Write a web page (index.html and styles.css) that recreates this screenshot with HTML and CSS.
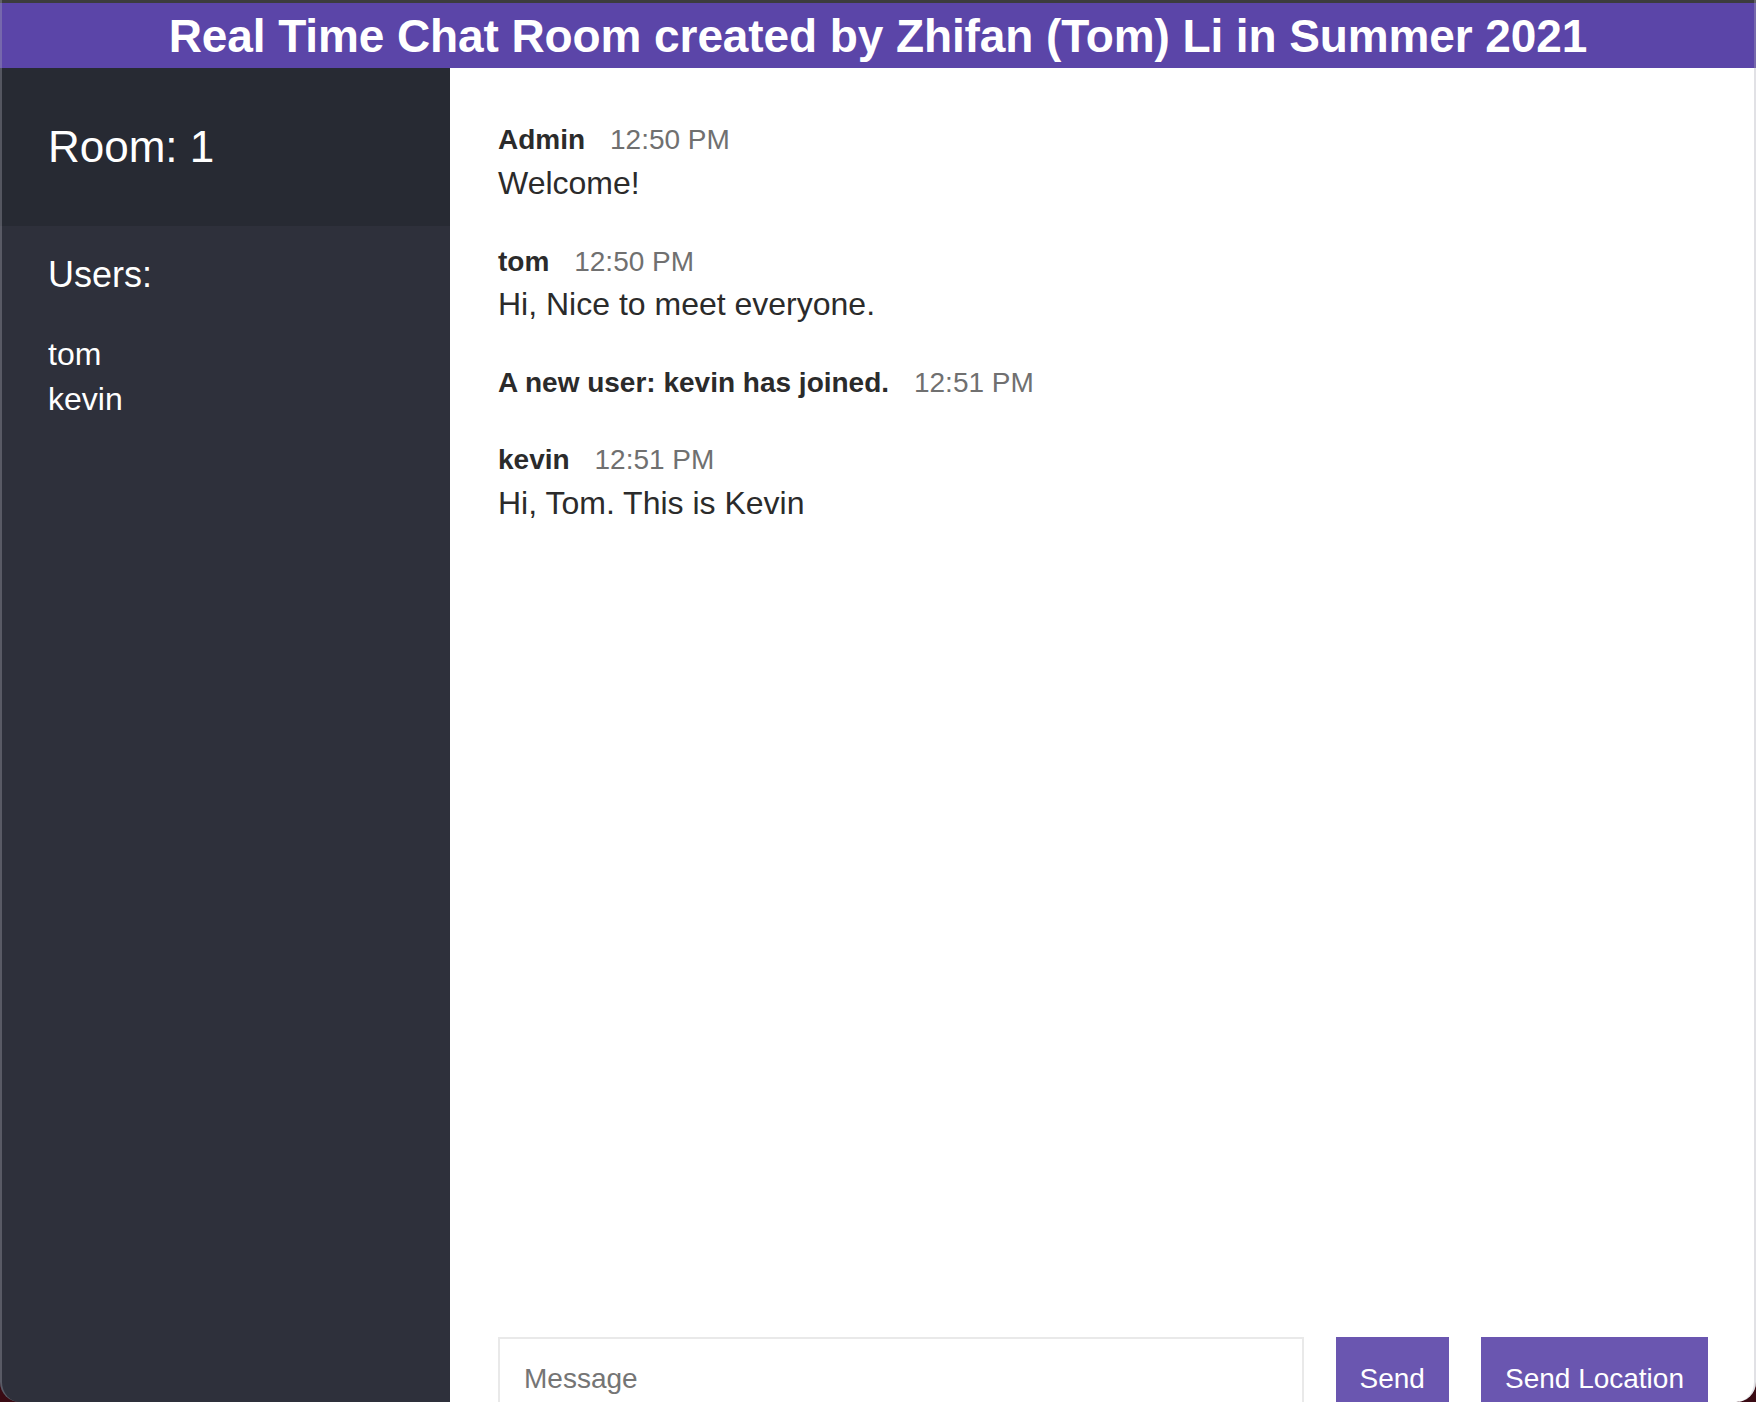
FILE: index.html
```html
<!DOCTYPE html>
<html lang="en">
<head>
<meta charset="utf-8">
<title>Chat App</title>
<link rel="stylesheet" href="styles.css">
</head>
<body>
<div class="topbar"></div>
<header class="header">
  <h1 class="header__title">Real Time Chat Room created by Zhifan (Tom) Li in Summer 2021</h1>
</header>
<div class="chat">
  <aside class="sidebar">
    <h2 class="room-title">Room: 1</h2>
    <h3 class="list-title">Users:</h3>
    <ul class="users">
      <li>tom</li>
      <li>kevin</li>
    </ul>
  </aside>
  <main class="main">
    <div class="messages">
      <div class="message">
        <p><span class="message__name">Admin</span> <span class="message__meta">12:50 PM</span></p>
        <p>Welcome!</p>
      </div>
      <div class="message">
        <p><span class="message__name">tom</span> <span class="message__meta">12:50 PM</span></p>
        <p>Hi, Nice to meet everyone.</p>
      </div>
      <div class="message">
        <p><span class="message__name">A new user: kevin has joined.</span> <span class="message__meta">12:51 PM</span></p>
      </div>
      <div class="message">
        <p><span class="message__name">kevin</span> <span class="message__meta">12:51 PM</span></p>
        <p>Hi, Tom. This is Kevin</p>
      </div>
    </div>
    <div class="compose">
      <form class="compose__form">
        <input class="compose__input" name="message" placeholder="Message" autocomplete="off">
        <button class="btn" type="button">Send</button>
      </form>
      <button class="btn" type="button">Send Location</button>
    </div>
  </main>
</div>
<div class="frame"></div>
</body>
</html>
```

FILE: styles.css
```css
* {
  margin: 0;
  padding: 0;
  box-sizing: border-box;
}

html, body {
  height: 100%;
  overflow: hidden;
}

body {
  font-family: "Liberation Sans", Arial, Helvetica, sans-serif;
  font-size: 32px;
  line-height: 1.4;
  color: #2b2b2b;
  background: #ffffff;
}

.topbar {
  height: 3px;
  background: #3c3c3e;
}

.header {
  height: 65px;
  background: #5b45a8;
  display: flex;
  justify-content: center;
  align-items: flex-start;
}

.header__title {
  color: #ffffff;
  font-size: 46px;
  font-weight: 700;
  line-height: 1;
  padding-top: 10px;
  letter-spacing: -0.1px;
  white-space: nowrap;
}

.chat {
  display: flex;
  height: 1401px;
}

.sidebar {
  width: 450px;
  flex-shrink: 0;
  background: #2e303b;
  color: #ffffff;
}

.room-title {
  font-weight: 400;
  font-size: 44px;
  line-height: 1.4;
  background: #272a33;
  padding: 48px;
}

.list-title {
  font-weight: 400;
  font-size: 36px;
  line-height: 1.4;
  padding: 24px 48px 0 48px;
  margin-bottom: 8px;
}

.users {
  list-style-type: none;
  font-weight: 300;
  font-size: 32px;
  padding: 24px 48px 0 48px;
}

.users li {
  line-height: 1.42;
}

.main {
  flex-grow: 1;
  display: flex;
  flex-direction: column;
}

.messages {
  flex-grow: 1;
  padding: 48px 48px 0 48px;
}

.message {
  margin-bottom: 32px;
}

.message__name {
  font-weight: 700;
  font-size: 28px;
  margin-right: 16px;
}

.message__meta {
  color: #707070;
  font-size: 28px;
}

.compose {
  display: flex;
  flex-shrink: 0;
  margin-top: 32px;
  padding: 48px;
}

.compose__form {
  display: flex;
  flex-grow: 1;
  margin-right: 32px;
}

.compose__input {
  border: 2px solid #e9e9e9;
  width: 100%;
  padding: 24px;
  margin-right: 32px;
  flex-grow: 1;
  font-family: "Liberation Sans", Arial, sans-serif;
  font-size: 28px;
  color: #2b2b2b;
  outline: none;
}

.compose__input::placeholder {
  color: #757575;
}

.btn {
  padding: 24px;
  background: #6a56b0;
  border: none;
  color: #ffffff;
  font-family: "Liberation Sans", Arial, sans-serif;
  font-size: 28px;
  line-height: 32px;
  white-space: nowrap;
  cursor: pointer;
}

.frame {
  position: fixed;
  top: -60px;
  left: 0;
  right: 0;
  bottom: 0;
  border-left: 2px solid rgba(170, 170, 180, 0.35);
  border-right: 2px solid rgba(170, 170, 180, 0.35);
  border-bottom-left-radius: 20px;
  border-bottom-right-radius: 20px;
  box-shadow: 0 0 0 40px #3a0b14;
  pointer-events: none;
}
```
